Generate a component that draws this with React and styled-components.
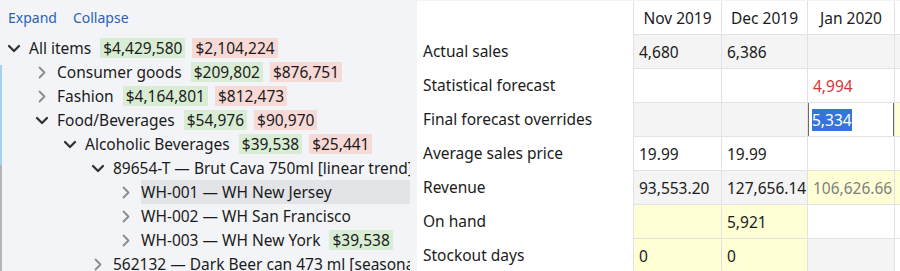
import React from "react";
import styled, { createGlobalStyle } from "styled-components";
import { FiChevronDown, FiChevronRight } from "react-icons/fi";

const GlobalStyle = createGlobalStyle`
  body {
    margin: 0;
    background-color: #f3f4f7;
    font-family: "Noto Sans", "Open Sans", sans-serif;
    color: #1b1b1b;
  }
`;

const Layout = styled.div`
  display: flex;
  width: 900px;
  height: 271px;
  overflow: hidden;
`;

const TreePanel = styled.aside`
  width: 415px;
  flex-shrink: 0;
  background-color: #f3f4f7;
  border-left: 2px solid transparent;
  border-image: linear-gradient(
      to bottom,
      #f3f4f7 0 66px,
      #a8d0f3 66px 165px,
      #b4b4b4 165px 100%
    )
    1;
`;

const Toolbar = styled.div`
  display: flex;
  gap: 16px;
  height: 36px;
  align-items: center;
  padding: 0 0 2px 6px;
  box-sizing: border-box;
`;

const ToolLink = styled.a`
  color: #2a62b6;
  font-size: 14px;
  text-decoration: none;
  cursor: pointer;
`;

const Tree = styled.ul`
  list-style: none;
  margin: 0;
  padding: 0;
  width: 408px;
  overflow: hidden;
`;

const TreeRow = styled.li`
  display: flex;
  align-items: center;
  height: 24px;
  padding-left: ${(p) => p.$level * 28 + 2}px;
  white-space: nowrap;
  font-size: 15.5px;
`;

const Toggle = styled.span`
  display: inline-flex;
  width: 20px;
  flex-shrink: 0;
  align-items: center;
  justify-content: center;
  margin-right: 5px;
  color: ${(p) => (p.$open ? "#2e2e2e" : "#8c8c8c")};
  font-size: 21px;

  & svg {
    stroke-width: ${(p) => (p.$open ? 2.6 : 2.2)};
  }
`;

const Label = styled.span`
  display: inline-flex;
  align-items: center;
  height: 24px;
  padding-right: 2px;
  flex-shrink: 0;
  ${(p) => p.$selected && "background-color: #e2e4e8; flex: 1 0 auto;"}
`;

const Badge = styled.span`
  display: inline-flex;
  align-items: center;
  height: 20px;
  padding: 0 3px;
  margin-left: 7px;
  flex-shrink: 0;
  background-color: ${(p) => (p.$tone === "good" ? "#d9edd5" : "#f7d9d6")};
`;

const GridPanel = styled.section`
  flex: 1;
  background-color: #ffffff;
  margin-top: 1px;
  overflow: hidden;
`;

const Grid = styled.div`
  display: grid;
  grid-template-columns: 216px 89px 86px 87px 90px;
  grid-template-rows: 33px;
  grid-auto-rows: 34px;
  font-size: 15.5px;
`;

const RowLabel = styled.div`
  display: flex;
  align-items: center;
  padding-left: 6px;
  background-color: #fff;
`;

const Head = styled.div`
  display: flex;
  align-items: center;
  justify-content: center;
  border-right: 1px solid #e2e2e2;
  ${(p) => p.$first && "border-left: 1px solid #e2e2e2;"}
`;

const fills = {
  white: "#ffffff",
  gray: "#f4f4f4",
  yellow: "#ffffd6",
};

const Cell = styled.div`
  display: flex;
  align-items: center;
  padding-left: 5px;
  box-sizing: border-box;
  white-space: nowrap;
  overflow: hidden;
  background-color: ${(p) => fills[p.$fill || "white"]};
  border-right: 1px solid #e2e2e2;
  border-top: 1px solid #e2e2e2;
  ${(p) => p.$first && "border-left: 1px solid #e2e2e2;"}
  color: ${(p) =>
    p.$tone === "warn" ? "#d83434" : p.$tone === "muted" ? "#808080" : "#1b1b1b"};
`;

const EditBox = styled.div`
  display: flex;
  align-items: center;
  width: 100%;
  height: 100%;
  margin-left: -5px;
  padding-left: 3px;
  border: 1px solid #6a6a6a;
  background: #fff;
`;

const Selection = styled.span`
  background-color: #3574d8;
  color: #fff;
`;

const tree = [
  { level: 0, open: true, label: "All items", good: "$4,429,580", bad: "$2,104,224" },
  { level: 1, label: "Consumer goods", good: "$209,802", bad: "$876,751" },
  { level: 1, label: "Fashion", good: "$4,164,801", bad: "$812,473" },
  { level: 1, open: true, label: "Food/Beverages", good: "$54,976", bad: "$90,970" },
  { level: 2, open: true, label: "Alcoholic Beverages", good: "$39,538", bad: "$25,441" },
  { level: 3, open: true, label: "89654-T \u2014 Brut Cava 750ml [linear trend]" },
  { level: 4, label: "WH-001 \u2014 WH New Jersey", selected: true },
  { level: 4, label: "WH-002 \u2014 WH San Francisco" },
  { level: 4, label: "WH-003 \u2014 WH New York", good: "$39,538" },
  { level: 3, label: "562132 \u2014 Dark Beer can 473 ml [seasonal]" },
];

const months = ["Nov 2019", "Dec 2019", "Jan 2020", "Feb 2020"];

const measures = [
  {
    name: "Actual sales",
    cells: [
      { v: "4,680", fill: "gray" },
      { v: "6,386", fill: "gray" },
      { fill: "gray" },
      { fill: "gray" },
    ],
  },
  {
    name: "Statistical forecast",
    cells: [{}, {}, { v: "4,994", tone: "warn" }, { v: "4,912", tone: "warn" }],
  },
  {
    name: "Final forecast overrides",
    cells: [{ fill: "gray" }, { fill: "gray" }, { edit: "5,334" }, { fill: "yellow" }],
  },
  {
    name: "Average sales price",
    cells: [{ v: "19.99" }, { v: "19.99" }, {}, {}],
  },
  {
    name: "Revenue",
    cells: [
      { v: "93,553.20", fill: "gray" },
      { v: "127,656.14", fill: "gray" },
      { v: "106,626.66", fill: "yellow", tone: "muted" },
      { v: "98,192.40", fill: "yellow", tone: "muted" },
    ],
  },
  {
    name: "On hand",
    cells: [{ fill: "yellow" }, { v: "5,921", fill: "yellow" }, {}, {}],
  },
  {
    name: "Stockout days",
    cells: [{ v: "0", fill: "yellow" }, { v: "0", fill: "yellow" }, { fill: "gray" }, {}],
  },
];

function TreeItem({ item }) {
  return (
    <TreeRow $level={item.level}>
      <Toggle $open={item.open}>
        {item.open ? <FiChevronDown /> : <FiChevronRight />}
      </Toggle>
      <Label $selected={item.selected}>{item.label}</Label>
      {item.good && <Badge $tone="good">{item.good}</Badge>}
      {item.bad && <Badge $tone="bad">{item.bad}</Badge>}
    </TreeRow>
  );
}

function App() {
  return (
    <Layout>
      <GlobalStyle />
      <TreePanel>
        <Toolbar>
          <ToolLink>Expand</ToolLink>
          <ToolLink>Collapse</ToolLink>
        </Toolbar>
        <Tree>
          {tree.map((item, i) => (
            <TreeItem key={i} item={item} />
          ))}
        </Tree>
      </TreePanel>
      <GridPanel>
        <Grid>
          <RowLabel />
          {months.map((m, i) => (
            <Head key={m} $first={i === 0}>
              {m}
            </Head>
          ))}
          {measures.map((row) => (
            <React.Fragment key={row.name}>
              <RowLabel>{row.name}</RowLabel>
              {row.cells.map((c, i) => (
                <Cell key={i} $first={i === 0} $fill={c.fill} $tone={c.tone}>
                  {c.edit ? (
                    <EditBox>
                      <Selection>{c.edit}</Selection>
                    </EditBox>
                  ) : (
                    c.v
                  )}
                </Cell>
              ))}
            </React.Fragment>
          ))}
        </Grid>
      </GridPanel>
    </Layout>
  );
}

export default App;
